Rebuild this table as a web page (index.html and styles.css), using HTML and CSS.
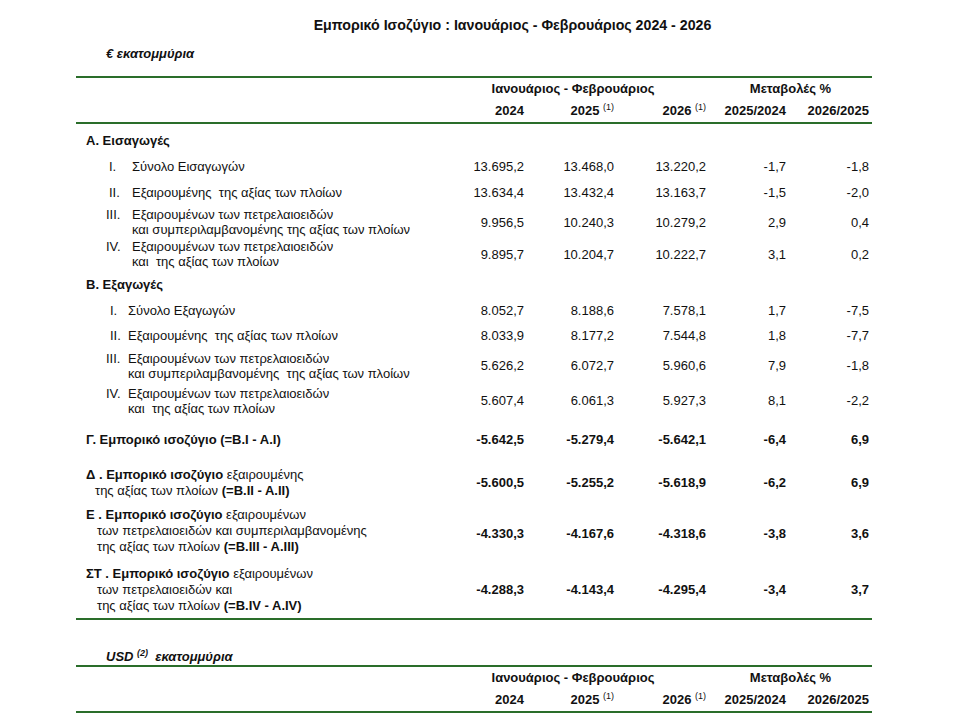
FILE: index.html
```html
<!DOCTYPE html>
<html lang="el">
<head>
<meta charset="utf-8">
<title>Εμπορικό Ισοζύγιο</title>
<link rel="stylesheet" href="styles.css">
</head>
<body>
<main class="sheet">
  <h1 class="title">Εμπορικό Ισοζύγιο : Ιανουάριος - Φεβρουάριος 2024 - 2026</h1>
  <p class="unit">€ εκατομμύρια</p>
  <table class="data">
    <colgroup>
      <col class="c-lbl"><col class="c-a"><col class="c-b"><col class="c-c"><col class="c-d"><col class="c-e">
    </colgroup>
    <thead>
      <tr class="hrow1">
        <th></th>
        <th colspan="3" class="h-period">Ιανουάριος - Φεβρουάριος</th>
        <th colspan="2" class="h-change">Μεταβολές %</th>
      </tr>
      <tr class="hrow2">
        <th></th>
        <th class="h-num">2024</th>
        <th class="h-num">2025 <span class="sup">(1)</span></th>
        <th class="h-num">2026 <span class="sup">(1)</span></th>
        <th class="h-num">2025/2024</th>
        <th class="h-num">2026/2025</th>
      </tr>
    </thead>
    <tbody>
      <tr class="sec sec-first"><td class="lbl">Α. Εισαγωγές</td><td></td><td></td><td></td><td></td><td></td></tr>
      <tr class="item h25"><td class="lbl"><div class="it imp"><span class="rn rn-short">I.</span><span class="txt">Σύνολο Εισαγωγών</span></div></td><td class="num">13.695,2</td><td class="num">13.468,0</td><td class="num">13.220,2</td><td class="num">-1,7</td><td class="num">-1,8</td></tr>
      <tr class="item h27"><td class="lbl"><div class="it imp"><span class="rn rn-short">II.</span><span class="txt">Εξαιρουμένης &nbsp;της αξίας των πλοίων</span></div></td><td class="num">13.634,4</td><td class="num">13.432,4</td><td class="num">13.163,7</td><td class="num">-1,5</td><td class="num">-2,0</td></tr>
      <tr class="item h32"><td class="lbl"><div class="it imp"><span class="rn">III.</span><span class="txt">Εξαιρουμένων των πετρελαιοειδών<br>και συμπεριλαμβανομένης της αξίας των πλοίων</span></div></td><td class="num">9.956,5</td><td class="num">10.240,3</td><td class="num">10.279,2</td><td class="num">2,9</td><td class="num">0,4</td></tr>
      <tr class="item h32"><td class="lbl"><div class="it imp"><span class="rn">IV.</span><span class="txt">Εξαιρουμένων των πετρελαιοειδών<br>και &nbsp;της αξίας των πλοίων</span></div></td><td class="num">9.895,7</td><td class="num">10.204,7</td><td class="num">10.222,7</td><td class="num">3,1</td><td class="num">0,2</td></tr>
      <tr class="sec"><td class="lbl">Β. Εξαγωγές</td><td></td><td></td><td></td><td></td><td></td></tr>
      <tr class="item h24"><td class="lbl"><div class="it exp"><span class="rn rn-short">I.</span><span class="txt">Σύνολο Εξαγωγών</span></div></td><td class="num">8.052,7</td><td class="num">8.188,6</td><td class="num">7.578,1</td><td class="num">1,7</td><td class="num">-7,5</td></tr>
      <tr class="item h27"><td class="lbl"><div class="it exp"><span class="rn rn-short">II.</span><span class="txt">Εξαιρουμένης &nbsp;της αξίας των πλοίων</span></div></td><td class="num">8.033,9</td><td class="num">8.177,2</td><td class="num">7.544,8</td><td class="num">1,8</td><td class="num">-7,7</td></tr>
      <tr class="item h33"><td class="lbl"><div class="it exp"><span class="rn">III.</span><span class="txt">Εξαιρουμένων των πετρελαιοειδών<br>και συμπεριλαμβανομένης &nbsp;της αξίας των πλοίων</span></div></td><td class="num">5.626,2</td><td class="num">6.072,7</td><td class="num">5.960,6</td><td class="num">7,9</td><td class="num">-1,8</td></tr>
      <tr class="item h37"><td class="lbl"><div class="it exp"><span class="rn">IV.</span><span class="txt">Εξαιρουμένων των πετρελαιοειδών<br>και &nbsp;της αξίας των πλοίων</span></div></td><td class="num">5.607,4</td><td class="num">6.061,3</td><td class="num">5.927,3</td><td class="num">8,1</td><td class="num">-2,2</td></tr>
      <tr class="tot h41"><td class="lbl"><b>Γ. Εμπορικό ισοζύγιο (=B.I - A.I)</b></td><td class="num">-5.642,5</td><td class="num">-5.279,4</td><td class="num">-5.642,1</td><td class="num">-6,4</td><td class="num">6,9</td></tr>
      <tr class="tot h46"><td class="lbl"><b>Δ . Εμπορικό ισοζύγιο</b> εξαιρουμένης<span class="cont cont-d">της αξίας των πλοίων <b>(=B.II - A.II)</b></span></td><td class="num">-5.600,5</td><td class="num">-5.255,2</td><td class="num">-5.618,9</td><td class="num">-6,2</td><td class="num">6,9</td></tr>
      <tr class="tot h55"><td class="lbl lbl-up"><b>Ε . Εμπορικό ισοζύγιο</b> εξαιρουμένων<span class="cont">των πετρελαιοειδών και συμπεριλαμβανομένης</span><span class="cont">της αξίας των πλοίων <b>(=B.III - A.III)</b></span></td><td class="num">-4.330,3</td><td class="num">-4.167,6</td><td class="num">-4.318,6</td><td class="num">-3,8</td><td class="num">3,6</td></tr>
      <tr class="tot h59 last"><td class="lbl"><b>ΣΤ . Εμπορικό ισοζύγιο</b> εξαιρουμένων<span class="cont">των πετρελαιοειδών και</span><span class="cont">της αξίας των πλοίων <b>(=B.IV - A.IV)</b></span></td><td class="num">-4.288,3</td><td class="num">-4.143,4</td><td class="num">-4.295,4</td><td class="num">-3,4</td><td class="num">3,7</td></tr>
    </tbody>
  </table>

  <p class="unit unit-usd">USD <span class="sup">(2)</span> &nbsp;εκατομμύρια</p>
  <table class="data">
    <colgroup>
      <col class="c-lbl"><col class="c-a"><col class="c-b"><col class="c-c"><col class="c-d"><col class="c-e">
    </colgroup>
    <thead>
      <tr class="hrow1">
        <th></th>
        <th colspan="3" class="h-period">Ιανουάριος - Φεβρουάριος</th>
        <th colspan="2" class="h-change">Μεταβολές %</th>
      </tr>
      <tr class="hrow2">
        <th></th>
        <th class="h-num">2024</th>
        <th class="h-num">2025 <span class="sup">(1)</span></th>
        <th class="h-num">2026 <span class="sup">(1)</span></th>
        <th class="h-num">2025/2024</th>
        <th class="h-num">2026/2025</th>
      </tr>
    </thead>
  </table>
</main>
</body>
</html>
```

FILE: styles.css
```css
* { box-sizing: content-box; }

html, body {
  margin: 0;
  padding: 0;
  background: #ffffff;
}

body {
  font-family: "Liberation Sans", Arial, sans-serif;
  font-size: 13px;
  color: #111111;
}

.sheet {
  width: 796px;
  margin-left: 76px;
  padding-top: 17px;
}

.title {
  margin: 0;
  padding-left: 77px;
  text-align: center;
  font-size: 14.2px;
  line-height: 17px;
  font-weight: bold;
}

.unit {
  margin: 12px 0 14px 30px;
  font-size: 13px;
  line-height: 16px;
  font-weight: bold;
  font-style: italic;
}

.unit-usd {
  margin-top: 27px;
  margin-bottom: 0;
  padding-top: 2px;
  line-height: 16px;
}

.unit .sup {
  font-size: 9px;
  vertical-align: 5px;
  line-height: 0;
}

.data {
  width: 796px;
  table-layout: fixed;
  border-collapse: separate;
  border-spacing: 0;
}

.c-lbl { width: 368px; }
.c-a { width: 83px; }
.c-b { width: 90px; }
.c-c { width: 92px; }
.c-d { width: 80px; }
.c-e { width: 83px; }

.data th {
  padding: 0;
  height: 22px;
  line-height: 22px;
  font-weight: bold;
  font-size: 13px;
  white-space: nowrap;
}

.hrow1 th {
  border-top: 2px solid #2a6d2a;
  vertical-align: bottom;
}

.hrow2 th {
  border-bottom: 2px solid #2a6d2a;
  vertical-align: top;
}

.h-period {
  text-align: center;
  padding-right: 7px !important;
}

.h-change {
  text-align: center;
}

.h-num {
  text-align: right;
  padding-right: 3px !important;
}

.data .sup {
  font-size: 9px;
  font-weight: normal;
  vertical-align: 5px;
  line-height: 0;
}

.data td {
  padding: 0;
  vertical-align: middle;
  line-height: 15px;
  white-space: nowrap;
}

.data td.num {
  text-align: right;
  padding-right: 3px;
}

.lbl {
  padding-left: 10px !important;
}

.sec td {
  height: 28px;
  font-weight: bold;
}

.sec-first td {
  height: 27px;
  padding-top: 3px;
}

.h24 td { height: 24px; }
.h25 td { height: 25px; }
.h27 td { height: 27px; }
.h32 td { height: 32px; }
.h33 td { height: 33px; }
.h37 td { height: 37px; }
.h41 td { height: 41px; }
.h46 td { height: 46px; }
.h55 td { height: 55px; }
.h59 td { height: 57px; }

.item td {
  line-height: 15px;
}

.it {
  display: flex;
  align-items: flex-start;
  padding-left: 20px;
}

.it .rn {
  flex: 0 0 auto;
}

.imp .rn { width: 26px; }
.imp .rn-short { width: 23px; margin-left: 3px; }

.exp .rn { width: 22px; }
.exp .rn-short { width: 18px; margin-left: 4px; }

.tot td.num {
  font-weight: bold;
}

.tot td {
  line-height: 16px;
}

.tot td.lbl-up {
  padding-bottom: 5px;
  height: 50px;
}

.cont {
  display: block;
  padding-left: 11px;
}

.cont-d {
  padding-left: 9px;
}

.last td {
  border-bottom: 2px solid #2a6d2a;
}
```
